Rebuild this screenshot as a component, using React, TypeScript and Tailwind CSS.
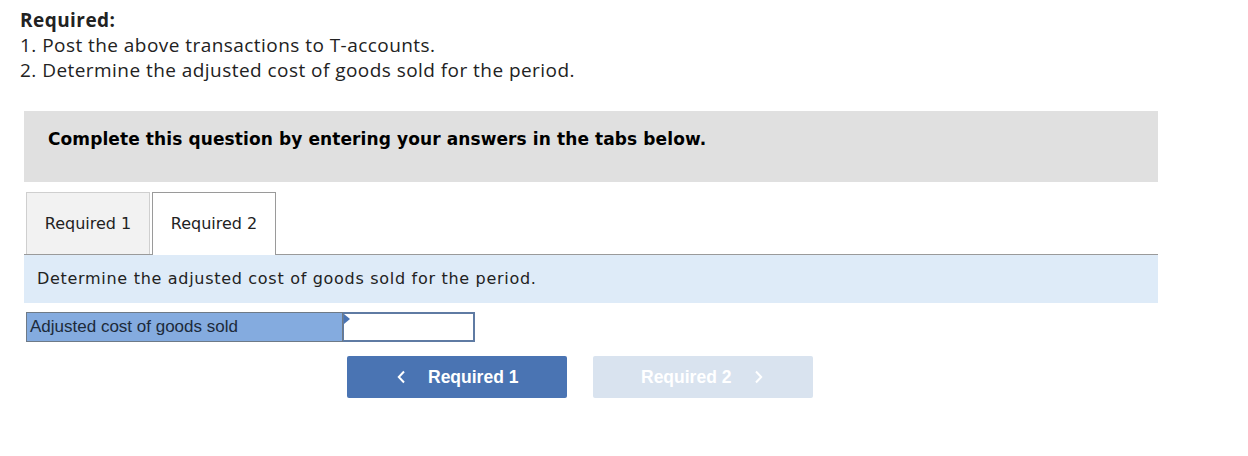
import React from "react";

/* Question footer: required list, tabs, answer row and nav buttons */

function Chevron({ dir }: { dir: "left" | "right" }) {
  return (
    <svg width="9" height="14" viewBox="0 0 9 14" fill="none" stroke="currentColor" strokeWidth={2}>
      {dir === "left" ? <path d="M7 1.5 L1.8 7 L7 12.5" /> : <path d="M2 1.5 L7.2 7 L2 12.5" />}
    </svg>
  );
}

export default function App() {
  return (
    <div className="h-[456px] w-[1248px] overflow-hidden bg-white text-[#222]">
      {/* Required list */}
      <div className="pl-[20px] pt-[8px] font-['Open_Sans',sans-serif] text-[19px] leading-[25px] tracking-[0.45px]">
        <p className="font-bold">Required:</p>
        <p>1. Post the above transactions to T-accounts.</p>
        <p>2. Determine the adjusted cost of goods sold for the period.</p>
      </div>

      <div className="ml-[24px] mt-[28px] w-[1134px] font-['DejaVu_Sans',Verdana,sans-serif]">
        {/* Instruction banner */}
        <div className="flex h-[71px] items-center bg-[#e0e0e0] pb-[13px] pl-[24px] text-[17px] font-bold tracking-[0.1px] text-black">
          Complete this question by entering your answers in the tabs below.
        </div>

        {/* Tabs */}
        <div className="mt-[10px] flex items-end border-b border-[#9a9a9a] pl-[2px]">
          <div className="flex h-[62px] w-[124px] items-center justify-center border border-b-0 border-[#cfcfcf] bg-[#f2f2f2] text-[16px]">
            Required 1
          </div>
          <div className="-mb-px ml-[2px] flex h-[63px] w-[124px] items-center justify-center border border-b-0 border-[#9a9a9a] bg-white text-[16px]">
            Required 2
          </div>
        </div>

        {/* Tab prompt */}
        <div className="flex h-[48px] items-center bg-[#deebf8] pl-[13px] text-[16px] tracking-[0.7px]">
          Determine the adjusted cost of goods sold for the period.
        </div>

        {/* Answer row */}
        <div className="ml-[2px] mt-[9px] flex h-[30px] font-['Liberation_Sans',Arial,sans-serif] text-[17px]">
          <div className="flex w-[317px] items-center border border-[#6e7a87] bg-[#84abdf] pl-[3px] text-[#1c2a3a]">
            Adjusted cost of goods sold
          </div>
          <div className="relative w-[132px] border-2 border-l border-[#5f7ba3] bg-white">
            <span className="absolute left-0 top-0 h-0 w-0 border-b-[5px] border-l-[6px] border-t-[5px] border-b-transparent border-l-[#4a74b3] border-t-transparent" />
          </div>
        </div>

        {/* Navigation */}
        <div className="mt-[14px] flex gap-[26px] pl-[323px] font-['Liberation_Sans',Arial,sans-serif] text-[17.5px] font-bold text-white">
          <button className="flex h-[42px] w-[220px] items-center gap-[22px] rounded-[2px] bg-[#4a74b3] pl-[50px]">
            <Chevron dir="left" />
            <span>Required 1</span>
          </button>
          <button className="flex h-[42px] w-[220px] items-center gap-[23px] rounded-[2px] bg-[#d9e3ef] pl-[48px]">
            <span>Required 2</span>
            <Chevron dir="right" />
          </button>
        </div>
      </div>
    </div>
  );
}
